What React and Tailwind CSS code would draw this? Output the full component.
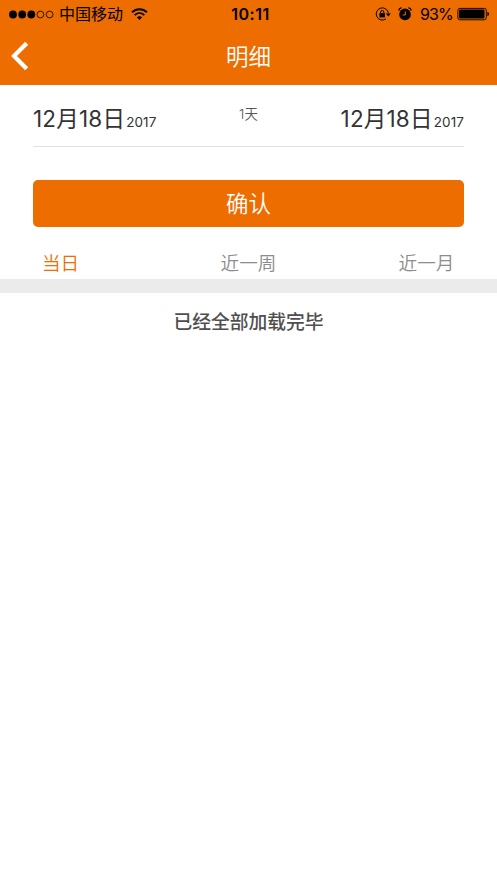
import { useState } from 'react'

const tabs = ['当日', '近一周', '近一月']

function StatusBar() {
  return (
    <div className="relative flex h-7 items-center justify-between pl-[9px] pr-[7px] text-black">
      <div className="flex items-center">
        <svg className="h-[9px] w-[45px]" viewBox="0 0 45 9">
          <circle cx="4" cy="4.5" r="3.9" />
          <circle cx="13.2" cy="4.5" r="3.9" />
          <circle cx="22.3" cy="4.5" r="3.9" />
          <circle cx="31.4" cy="4.5" r="3.4" fill="none" stroke="currentColor" strokeWidth="0.8" />
          <circle cx="40.6" cy="4.5" r="3.4" fill="none" stroke="currentColor" strokeWidth="0.8" />
        </svg>
        <span className="ml-[5px] text-[16px] leading-7">中国移动</span>
        <svg className="ml-[8px] h-[12px] w-[17px]" viewBox="0 0 17 12" fill="none" stroke="currentColor" strokeWidth="1.9">
          <path d="M1 4.3C5.2 0.2 11.8 0.2 16 4.3" />
          <path d="M3.7 7.1C6.5 4.5 10.5 4.5 13.3 7.1" />
          <path d="M8.5 11.9L5.9 9.3C7.3 8 9.7 8 11.1 9.3Z" fill="currentColor" stroke="none" />
        </svg>
      </div>

      <div className="absolute inset-x-0 top-0 pl-[4px] text-center text-[16px] font-semibold leading-7 tracking-[0.5px]">10:11</div>

      <div className="flex items-center">
        <svg className="h-[14px] w-[16px]" viewBox="0 0 16 14" fill="none" stroke="currentColor">
          <path d="M13.4 6.6A6.1 6.1 0 1 0 10.9 11.9" strokeWidth="1" />
          <path d="M10.8 6.6H15.8L13.3 9.4Z" fill="currentColor" stroke="none" />
          <rect x="4.4" y="6.2" width="5.6" height="4.2" fill="currentColor" stroke="none" />
          <path d="M5.6 6.3V5.1a1.6 1.6 0 0 1 3.2 0V6.3" strokeWidth="1" />
        </svg>
        <svg className="ml-[7px] h-[14px] w-[14px]" viewBox="0 0 14 14" fill="none" stroke="currentColor">
          <circle cx="7" cy="7.4" r="5.8" fill="currentColor" stroke="none" />
          <path d="M0.8 3.6C1 2 2 1 3.6 0.9M13.2 3.6C13 2 12 1 10.4 0.9" strokeWidth="1.2" />
          <path d="M7.3 4.4V8H4.6" stroke="#ed6d00" strokeWidth="1" />
        </svg>
        <span className="ml-[8px] text-[16px] leading-7 tracking-[-0.8px]">93%</span>
        <svg className="ml-[3px] h-[14px] w-[34px]" viewBox="0 0 34 14">
          <rect x="1.9" y="1.4" width="28.4" height="11.4" rx="2" fill="none" stroke="currentColor" strokeWidth="0.9" />
          <rect x="3.1" y="2.6" width="25.4" height="9" rx="1" />
          <path d="M31.4 5.1c2.2 0.5 2.2 3.5 0 4z" />
        </svg>
      </div>
    </div>
  )
}

function DateValue({ date, year }) {
  return (
    <div className="flex items-baseline text-[#333]">
      <span className="text-[22.5px] leading-8 tracking-[0.2px]">{date}</span>
      <span className="ml-[1px] text-[13.5px] tracking-[0.1px]">{year}</span>
    </div>
  )
}

export default function App() {
  const [active, setActive] = useState('当日')

  return (
    <div className="min-h-[883px] bg-white font-[Inter,'Noto_Sans_CJK_SC',sans-serif]">
      <header className="h-[85px] bg-[#ed6d00]">
        <StatusBar />
        <div className="grid h-[56px] grid-cols-[1fr_auto_1fr] items-center px-[11px] text-white">
          <button>
            <svg className="h-[30px] w-[18px]" viewBox="0 0 18 30" fill="none" stroke="currentColor" strokeWidth="4.2">
              <path d="M15.7 2.2L3 15L15.7 27.8" />
            </svg>
          </button>
          <h1 className="pt-[2px] text-[22.5px] font-[350]">明细</h1>
        </div>
      </header>

      <main>
        <div className="mx-[33px] flex h-[62px] justify-between border-b border-[#e2e2e2] pt-[18px]">
          <DateValue date="12月18日" year="2017" />
          <span className="pt-px text-[13.5px] font-[350] leading-5 text-[#555]">1天</span>
          <DateValue date="12月18日" year="2017" />
        </div>

        <div className="px-[33px] pt-[33px]">
          <button className="h-[47px] w-full rounded-[5px] bg-[#ed6d00] text-[22.5px] font-[350] leading-[46px] text-white">确认</button>
        </div>

        <div className="flex h-[52px] justify-between px-[42px] pt-[21px] text-[18.6px] font-[350] leading-[30px]">
          {tabs.map((tab) => (
            <button
              key={tab}
              onClick={() => setActive(tab)}
              className={tab === active ? 'h-[30px] w-[57px] whitespace-nowrap text-left text-[#ed6d00]' : 'h-[30px] w-[57px] whitespace-nowrap text-[#8c8c8c]'}
            >
              {tab}
            </button>
          ))}
        </div>

        <div className="h-[14px] bg-[#ebebeb]" />
        <p className="pt-[15px] text-center text-[18.8px] font-medium leading-[30px] text-[#4f4f4f]">已经全部加载完毕</p>
      </main>
    </div>
  )
}
